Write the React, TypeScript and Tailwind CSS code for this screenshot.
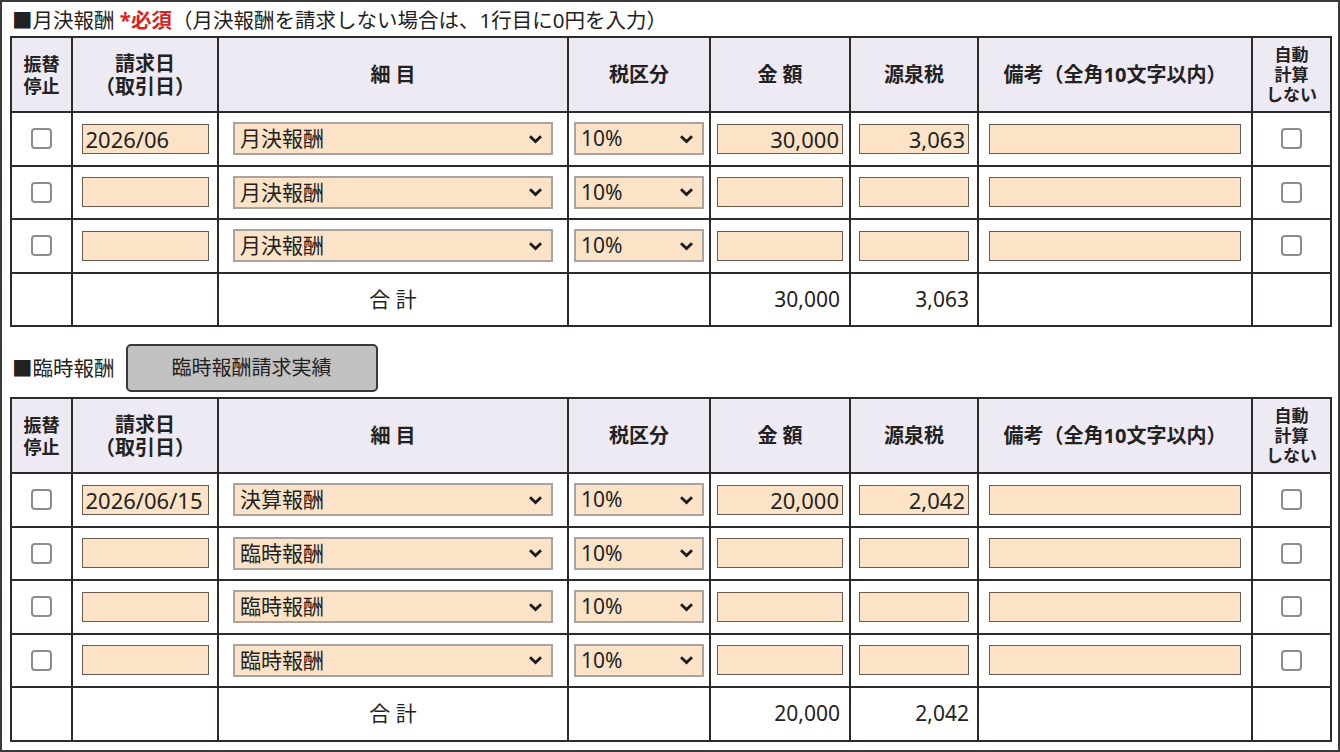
import { ReactNode } from "react";

type Row = {
  date?: string;
  item: string;
  tax: string;
  amount?: string;
  withholding?: string;
};

const monthlyRows: Row[] = [
  { date: "2026/06", item: "月決報酬", tax: "10%", amount: "30,000", withholding: "3,063" },
  { item: "月決報酬", tax: "10%" },
  { item: "月決報酬", tax: "10%" },
];

const extraRows: Row[] = [
  { date: "2026/06/15", item: "決算報酬", tax: "10%", amount: "20,000", withholding: "2,042" },
  { item: "臨時報酬", tax: "10%" },
  { item: "臨時報酬", tax: "10%" },
  { item: "臨時報酬", tax: "10%" },
];

const cell = "border-2 border-[#2e2a27] p-0";

function CheckBox() {
  return (
    <span className="mx-auto block h-[21px] w-[21px] rounded-[4px] border-2 border-[#8c8c8c] bg-white" />
  );
}

function TextBox({ value, width, right }: { value?: string; width: string; right?: boolean }) {
  return (
    <div
      className={`mx-auto flex h-[30px] items-center border border-[#6b5a4e] bg-[#fce3c7] px-[3px] text-[22px] leading-none text-[#222] ${width} ${
        right ? "justify-end" : "justify-start"
      }`}
    >
      {value}
    </div>
  );
}

function SelectBox({ value, width }: { value: string; width: string }) {
  return (
    <div
      className={`mx-auto flex h-[33px] items-center justify-between border-2 border-[#aaa49e] bg-[#fce3c7] pl-[5px] pr-[8px] text-[21px] leading-none text-[#222] ${width}`}
    >
      <span>{value}</span>
      <svg width="15" height="10" viewBox="0 0 15 10" fill="none">
        <path d="M2 2.2 7.5 7.5 13 2.2" stroke="#1a1a1a" strokeWidth="2.8" />
      </svg>
    </div>
  );
}

function HeadRow() {
  const th = `${cell} bg-[#eeeaf3] text-center font-bold text-[20px] leading-[23px] text-[#222]`;
  return (
    <tr className="h-[75px]">
      <th className={`${cell} bg-[#eeeaf3] text-center font-bold text-[18px] leading-[22px] text-[#222]`}>
        振替
        <br />
        停止
      </th>
      <th className={th}>
        請求日
        <br />
        （取引日）
      </th>
      <th className={th}>細 目</th>
      <th className={th}>税区分</th>
      <th className={th}>金 額</th>
      <th className={th}>源泉税</th>
      <th className={th}>備考（全角10文字以内）</th>
      <th className={`${cell} bg-[#eeeaf3] text-center font-bold text-[17px] leading-[20px] text-[#222]`}>
        自動
        <br />
        計算
        <br />
        しない
      </th>
    </tr>
  );
}

function FeeTable({ rows, amountTotal, taxTotal }: { rows: Row[]; amountTotal: string; taxTotal: string }) {
  return (
    <table className="w-[1320px] table-fixed border-collapse border-2 border-[#2e2a27]">
      <colgroup>
        <col className="w-[61px]" />
        <col className="w-[146px]" />
        <col className="w-[350px]" />
        <col className="w-[142px]" />
        <col className="w-[140px]" />
        <col className="w-[128px]" />
        <col className="w-[274px]" />
        <col className="w-[79px]" />
      </colgroup>
      <thead>
        <HeadRow />
      </thead>
      <tbody>
        {rows.map((r, i) => (
          <tr key={i} className="h-[53.5px]">
            <td className={cell}>
              <CheckBox />
            </td>
            <td className={cell}>
              <TextBox value={r.date} width="w-[127px]" />
            </td>
            <td className={cell}>
              <SelectBox value={r.item} width="w-[320px]" />
            </td>
            <td className={cell}>
              <SelectBox value={r.tax} width="w-[130px]" />
            </td>
            <td className={cell}>
              <TextBox value={r.amount} width="w-[126px]" right />
            </td>
            <td className={cell}>
              <TextBox value={r.withholding} width="w-[110px]" right />
            </td>
            <td className={cell}>
              <TextBox width="w-[252px]" />
            </td>
            <td className={cell}>
              <CheckBox />
            </td>
          </tr>
        ))}
        <tr className="h-[53.5px] text-[21px] text-[#222]">
          <td className={cell} />
          <td className={cell} />
          <td className={`${cell} text-center`}>合 計</td>
          <td className={cell} />
          <td className={`${cell} pr-[9px] text-right`}>{amountTotal}</td>
          <td className={`${cell} pr-[8px] text-right`}>{taxTotal}</td>
          <td className={cell} />
          <td className={cell} />
        </tr>
      </tbody>
    </table>
  );
}

function Label({ children }: { children: ReactNode }) {
  return <span className="text-[20.5px] leading-none text-[#222]">{children}</span>;
}

export default function App() {
  return (
    <div className="h-[752px] w-[1340px] overflow-hidden border-2 border-[#3a3a3a] bg-white px-[8px] font-['Noto_Sans','Noto_Sans_CJK_JP',sans-serif]">
      {/* 月決報酬 */}
      <div className="flex h-[34px] items-center pl-[2px] pt-[3px]">
        <Label>
          ■月決報酬 <b className="font-bold text-[#d9251d]">*必須</b>（月決報酬を請求しない場合は、1行目に0円を入力）
        </Label>
      </div>
      <FeeTable rows={monthlyRows} amountTotal="30,000" taxTotal="3,063" />

      {/* 臨時報酬 */}
      <div className="flex h-[70px] items-center gap-[11px] pl-[2px] pt-[12px]">
        <Label>■臨時報酬</Label>
        <button className="h-[48px] w-[252px] rounded-[5px] border-2 border-[#3a3a3a] bg-[#c2c2c2] text-[20px] text-[#222]">
          臨時報酬請求実績
        </button>
      </div>
      <FeeTable rows={extraRows} amountTotal="20,000" taxTotal="2,042" />
    </div>
  );
}
